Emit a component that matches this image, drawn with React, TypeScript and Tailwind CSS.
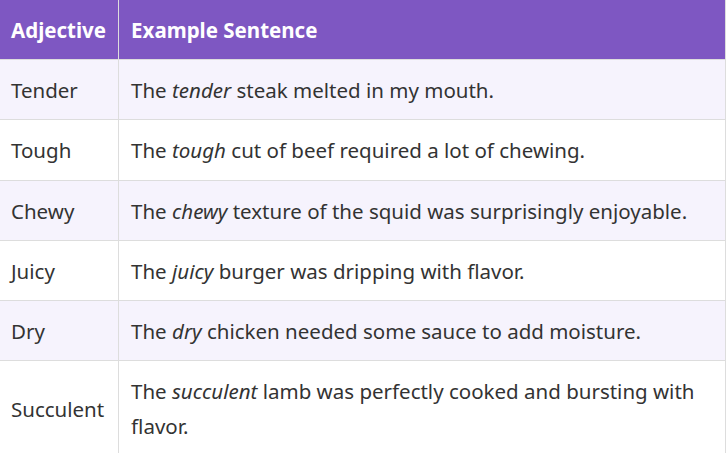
const rows: { adj: string; pre: string; word: string; post: string }[] = [
  { adj: 'Tender', pre: 'The ', word: 'tender', post: ' steak melted in my mouth.' },
  { adj: 'Tough', pre: 'The ', word: 'tough', post: ' cut of beef required a lot of chewing.' },
  { adj: 'Chewy', pre: 'The ', word: 'chewy', post: ' texture of the squid was surprisingly enjoyable.' },
  { adj: 'Juicy', pre: 'The ', word: 'juicy', post: ' burger was dripping with flavor.' },
  { adj: 'Dry', pre: 'The ', word: 'dry', post: ' chicken needed some sauce to add moisture.' },
  { adj: 'Succulent', pre: 'The ', word: 'succulent', post: ' lamb was perfectly cooked and bursting with flavor.' },
];

export default function App() {
  return (
    <div className="w-[726px] h-[453px] overflow-hidden bg-white" style={{ fontFamily: '"Noto Sans", "Open Sans", sans-serif' }}>
      <table className="w-[728px] -ml-[2px] -mt-px border-collapse text-[20.5px] leading-[35.2px] text-[#333]">
        <thead>
          <tr className="bg-[#7e57c2] text-white">
            <th className="w-[120px] border border-[#ddd] px-3 pt-[13px] pb-[11px] text-left font-bold">Adjective</th>
            <th className="border border-[#ddd] px-3 pt-[13px] pb-[11px] text-left font-bold">Example Sentence</th>
          </tr>
        </thead>
        <tbody>
          {rows.map((r, i) => (
            <tr key={r.adj} className={i % 2 === 0 ? 'bg-[#f6f3fd]' : 'bg-white'}>
              <td className="border border-[#ddd] px-3 pt-[13px] pb-[11px] align-middle">{r.adj}</td>
              <td className="border border-[#ddd] px-3 pt-[13px] pb-[11px] align-middle">
                {r.pre}
                <em>{r.word}</em>
                {r.post}
              </td>
            </tr>
          ))}
        </tbody>
      </table>
    </div>
  );
}
